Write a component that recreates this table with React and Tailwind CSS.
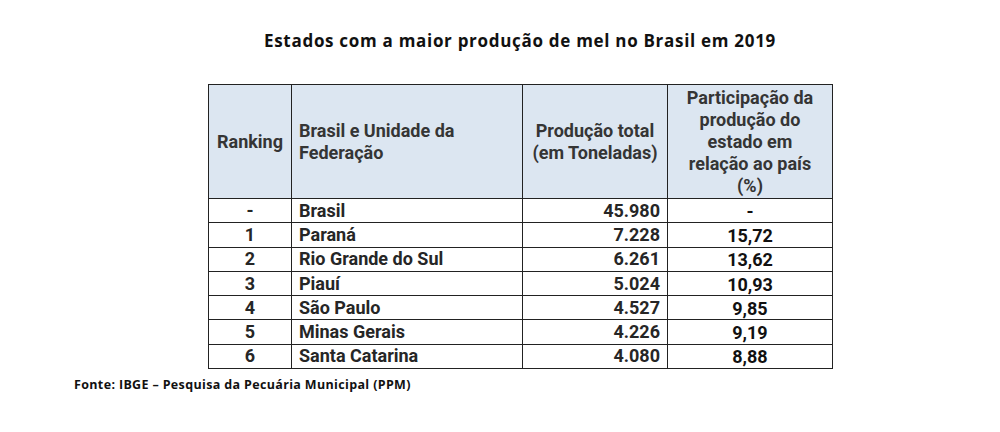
import React from 'react';

const rows = [
  { rank: '-', uf: 'Brasil', total: '45.980', pct: '-' },
  { rank: '1', uf: 'Paraná', total: '7.228', pct: '15,72' },
  { rank: '2', uf: 'Rio Grande do Sul', total: '6.261', pct: '13,62' },
  { rank: '3', uf: 'Piauí', total: '5.024', pct: '10,93' },
  { rank: '4', uf: 'São Paulo', total: '4.527', pct: '9,85' },
  { rank: '5', uf: 'Minas Gerais', total: '4.226', pct: '9,19' },
  { rank: '6', uf: 'Santa Catarina', total: '4.080', pct: '8,88' },
];

export default function App() {
  return (
    <div className="w-[1000px] h-[432px] bg-white pt-[29px]">
      {/* Title */}
      <h1 className="ml-[208px] w-[624px] text-center text-[17px] leading-[24px] tracking-[0.7px] font-bold text-[#111] font-['Open_Sans',sans-serif]">
        Estados com a maior produção de mel no Brasil em 2019
      </h1>

      {/* Table */}
      <table className="ml-[208px] mt-[31px] w-[624px] table-fixed border-collapse border border-[#222] font-['Roboto',sans-serif] text-[18px] font-bold text-[#262626]">
        <colgroup>
          <col className="w-[83px]" />
          <col className="w-[231px]" />
          <col className="w-[145px]" />
          <col className="w-[165px]" />
        </colgroup>
        <thead>
          <tr className="h-[114px] bg-[#dce6f1] leading-[22px] text-[#353535]">
            <th className="border border-[#222] text-center font-bold">Ranking</th>
            <th className="border border-[#222] text-left pl-[7px] font-bold">
              Brasil e Unidade da
              <br />
              Federação
            </th>
            <th className="border border-[#222] text-center font-bold">
              Produção total
              <br />
              (em Toneladas)
            </th>
            <th className="border border-[#222] text-center font-bold">
              Participação da
              <br />
              produção do
              <br />
              estado em
              <br />
              relação ao país
              <br />
              (%)
            </th>
          </tr>
        </thead>
        <tbody>
          {rows.map((r) => (
            <tr key={r.uf} className="h-[24.3px] leading-[20px]">
              <td className="border border-[#222] text-center">{r.rank}</td>
              <td className="border border-[#222] pl-[7px]">{r.uf}</td>
              <td className="border border-[#222] text-right pr-[7px]">{r.total}</td>
              <td className="border border-[#222] text-center text-[#111] pt-[2px]">{r.pct}</td>
            </tr>
          ))}
        </tbody>
      </table>

      {/* Source */}
      <p className="ml-[74px] mt-[8px] text-[12.5px] leading-[16px] tracking-[0.35px] font-bold text-[#111] font-['Open_Sans',sans-serif]">
        Fonte: IBGE – Pesquisa da Pecuária Municipal (PPM)
      </p>
    </div>
  );
}
